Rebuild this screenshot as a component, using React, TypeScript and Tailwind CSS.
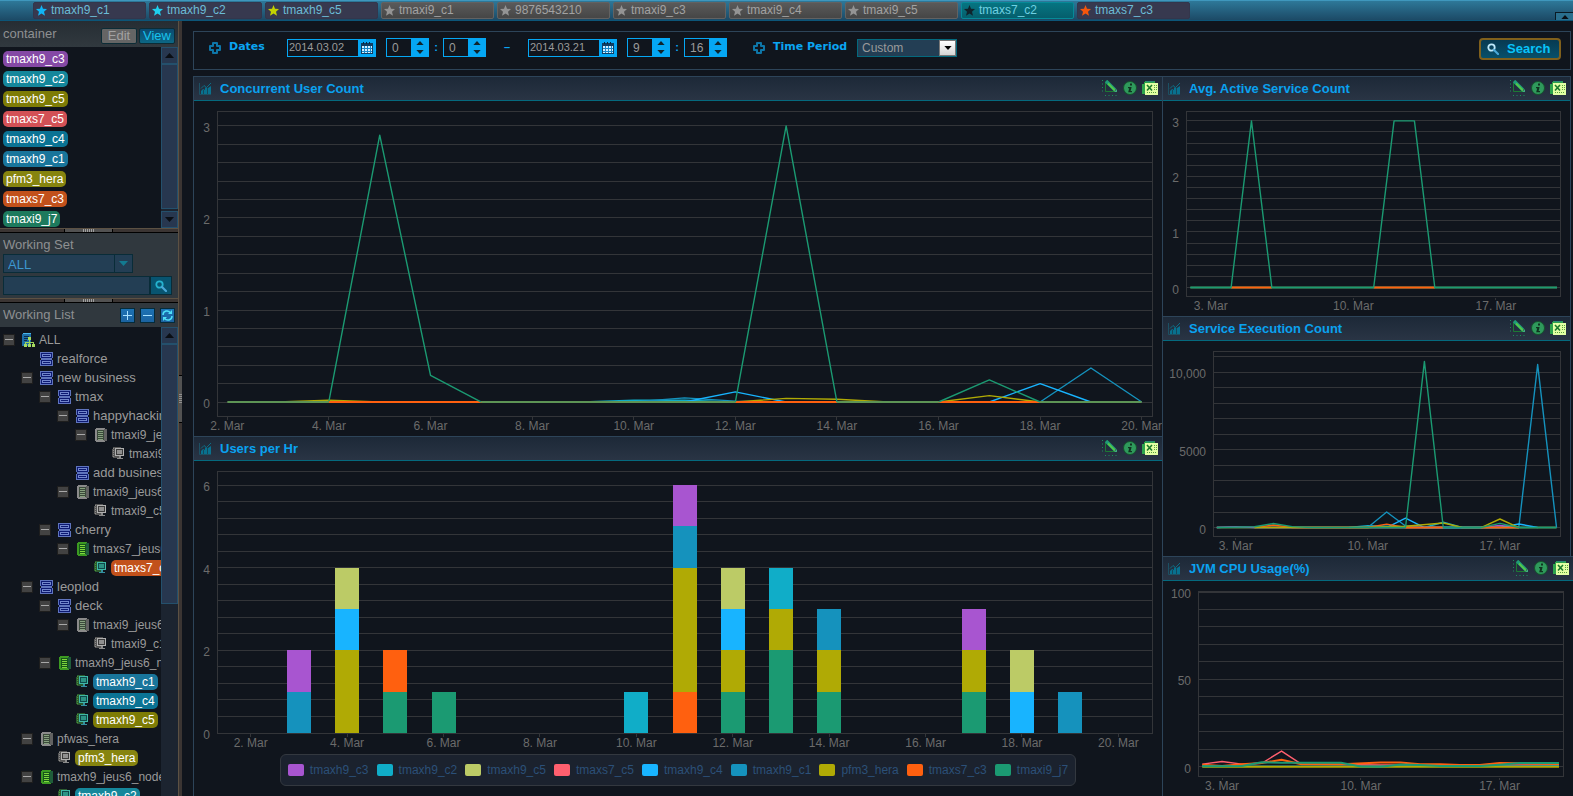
import React, { useState } from "react";
import clsx from "clsx";

const COLORS = {
  h9c3: "#a855d0",
  h9c2: "#10adc8",
  h9c5: "#bccb66",
  s7c5: "#ff5f6e",
  h9c4: "#18b4ff",
  h9c1: "#1592bd",
  hera: "#b0aa05",
  s7c3: "#ff600f",
  i9j7: "#1b9a72",
};

const tabs = [
  { name: "tmaxh9_c1", star: "#12b4f5", kind: "on" },
  { name: "tmaxh9_c2", star: "#1fd0ee", kind: "on" },
  { name: "tmaxh9_c5", star: "#c3d200", kind: "on" },
  { name: "tmaxi9_c1", star: "#949494", kind: "off" },
  { name: "9876543210", star: "#949494", kind: "off" },
  { name: "tmaxi9_c3", star: "#949494", kind: "off" },
  { name: "tmaxi9_c4", star: "#949494", kind: "off" },
  { name: "tmaxi9_c5", star: "#949494", kind: "off" },
  { name: "tmaxs7_c2", star: "#10242c", kind: "active" },
  { name: "tmaxs7_c3", star: "#f4560c", kind: "on" },
];

const containers = [
  { name: "tmaxh9_c3", bg: "bg-[#8549a5]" },
  { name: "tmaxh9_c2", bg: "bg-[#15879b]" },
  { name: "tmaxh9_c5", bg: "bg-[#7e7c06]" },
  { name: "tmaxs7_c5", bg: "bg-[#d35156]" },
  { name: "tmaxh9_c4", bg: "bg-[#0b7394]" },
  { name: "tmaxh9_c1", bg: "bg-[#19759b]" },
  { name: "pfm3_hera", bg: "bg-[#86840f]" },
  { name: "tmaxs7_c3", bg: "bg-[#c2511b]" },
  { name: "tmaxi9_j7", bg: "bg-[#1d7a5d]" },
];

type NodeKind = "root" | "group" | "node" | "nodeOn" | "was" | "wasOn";

interface TreeItem {
  level: number;
  label: string;
  kind: NodeKind;
  toggle?: boolean;
  chip?: string;
}

const tree: TreeItem[] = [
  { level: 0, label: "ALL", kind: "root", toggle: true },
  { level: 1, label: "realforce", kind: "group" },
  { level: 1, label: "new business", kind: "group", toggle: true },
  { level: 2, label: "tmax", kind: "group", toggle: true },
  { level: 3, label: "happyhacking", kind: "group", toggle: true },
  { level: 4, label: "tmaxi9_jeus6", kind: "node", toggle: true },
  { level: 5, label: "tmaxi9_c3", kind: "was" },
  { level: 3, label: "add business", kind: "group" },
  { level: 3, label: "tmaxi9_jeus6", kind: "node", toggle: true },
  { level: 4, label: "tmaxi9_c5", kind: "was" },
  { level: 2, label: "cherry", kind: "group", toggle: true },
  { level: 3, label: "tmaxs7_jeus6", kind: "nodeOn", toggle: true },
  { level: 4, label: "tmaxs7_c3", kind: "wasOn", chip: "bg-[#c2511b]" },
  { level: 1, label: "leoplod", kind: "group", toggle: true },
  { level: 2, label: "deck", kind: "group", toggle: true },
  { level: 3, label: "tmaxi9_jeus6", kind: "node", toggle: true },
  { level: 4, label: "tmaxi9_c1", kind: "was" },
  { level: 2, label: "tmaxh9_jeus6_node", kind: "nodeOn", toggle: true },
  { level: 3, label: "tmaxh9_c1", kind: "wasOn", chip: "bg-[#19759b]" },
  { level: 3, label: "tmaxh9_c4", kind: "wasOn", chip: "bg-[#0b7394]" },
  { level: 3, label: "tmaxh9_c5", kind: "wasOn", chip: "bg-[#7e7c06]" },
  { level: 1, label: "pfwas_hera", kind: "node", toggle: true },
  { level: 2, label: "pfm3_hera", kind: "was", chip: "bg-[#86840f]" },
  { level: 1, label: "tmaxh9_jeus6_node", kind: "nodeOn", toggle: true },
  { level: 2, label: "tmaxh9_c2", kind: "wasOn", chip: "bg-[#15879b]" },
];

const legend = [
  { name: "tmaxh9_c3", color: COLORS.h9c3 },
  { name: "tmaxh9_c2", color: COLORS.h9c2 },
  { name: "tmaxh9_c5", color: COLORS.h9c5 },
  { name: "tmaxs7_c5", color: COLORS.s7c5 },
  { name: "tmaxh9_c4", color: COLORS.h9c4 },
  { name: "tmaxh9_c1", color: COLORS.h9c1 },
  { name: "pfm3_hera", color: COLORS.hera },
  { name: "tmaxs7_c3", color: COLORS.s7c3 },
  { name: "tmaxi9_j7", color: COLORS.i9j7 },
];

type Point = [number, number];

interface Series {
  color: string;
  points: Point[];
  width?: number;
}

interface ChartProps {
  max: number;
  step: number;
  yLabels: [number, string][];
  days: number[];
  // where 2 Mar / 20 Mar and max / zero sit inside the frame, in percent
  x: [number, number];
  y: [number, number];
  series?: Series[];
  bars?: { day: number; parts: [string, number][] }[];
  pad: string;
}

/* ---------- icons ---------- */

const Star = ({ color }: { color: string }) => (
  <svg width="11" height="11" viewBox="0 0 11 11" className="shrink-0">
    <path d="M5.5 0 7 3.7 11 4 8 6.7 9 10.7 5.5 8.5 2 10.7 3 6.7 0 4 4 3.7Z" fill={color} />
  </svg>
);

const Cross = () => (
  <svg width="12" height="12" viewBox="0 0 12 12" className="shrink-0">
    <path d="M4 1H8V4H11V8H8V11H4V8H1V4H4Z" fill="#10151d" stroke="#0e76a8" strokeWidth="2" strokeLinejoin="round" />
  </svg>
);

const CalendarIcon = () => (
  <svg width="12" height="12" viewBox="0 0 12 12" shapeRendering="crispEdges">
    <path d="M0 1H12V12H0Z" fill="#103e63" />
    <path d="M2 0H3V2H2ZM5 0H6V2H5ZM8 0H9V2H8Z" fill="#06263f" />
    <path d="M1 4H11V11H1Z" fill="#d4efff" />
    <path d="M1 6H11M1 9H11M3.5 4V11M6.5 4V11M9 4V11" stroke="#1787c9" />
  </svg>
);

const Lens = ({ color }: { color: string }) => (
  <svg width="12" height="12" viewBox="0 0 12 12" fill="none">
    <circle cx="4.5" cy="4.5" r="3.2" stroke={color} strokeWidth="1.8" />
    <path d="M7 7 11 11" stroke="#4aa8d8" strokeWidth="2.2" strokeLinecap="round" />
  </svg>
);

const ChartIcon = () => (
  <svg width="13" height="13" viewBox="0 0 13 13" className="shrink-0">
    <path d="M.5 1V12.5H12" fill="none" stroke="#1c5063" />
    <path d="M2 9 4 7 6 8V12H2ZM6 6 7 5 9 7V12H6ZM9 6 12 4V12H9Z" fill="#08718f" />
    <path d="M2 6.5 5 3.5 7.5 5.5 12 1" fill="none" stroke="#0d6b83" />
    <path d="M4.5 8V12M8.5 6V12" stroke="#14485c" />
  </svg>
);

const PencilIcon = () => (
  <svg width="16" height="16" viewBox="0 0 16 16">
    <path d="M.5 0V12M3 15.5H16" stroke="#1f8c5c" strokeDasharray="1 2.5" />
    <path d="M3.5 3V11.5H13" fill="none" stroke="#1c7a33" />
    <path d="M4 1 13 10" stroke="#1f9d78" strokeWidth="3.4" />
    <path d="M6 3.5 13 10.5" stroke="#55c84a" strokeWidth="1.8" />
    <path d="M12 12H15V9Z" fill="#3fae7e" />
  </svg>
);

const InfoIcon = () => (
  <svg width="14" height="14" viewBox="0 0 14 14">
    <circle cx="7" cy="7" r="6.5" fill="#2f9a5c" stroke="#15532c" />
    <path d="M7 2.5H9V4.5H7ZM5 6H8.6L7.6 10H9V11.3H5.2L6.2 7.2H5Z" fill="#10331f" />
  </svg>
);

const ExcelIcon = () => (
  <svg width="16" height="16" viewBox="0 0 16 16" shapeRendering="crispEdges">
    <path d="M3 1H13V4H5V14H0V4H2V2H3Z" fill="#2ca34c" />
    <path d="M4 1H12V2H4Z" fill="#2a8a78" />
    <path d="M3 3H16V15H3Z" fill="#e2ffa3" />
    <path d="M5 5 10 10.5M10 5 5 10.5" stroke="#1b7a2c" strokeWidth="1.6" shapeRendering="auto" />
    <path d="M12 5.5H15M12 7.5H15M12 9.5H15M5 12.5H15" stroke="#55a03c" strokeDasharray="1 1" />
  </svg>
);

const TreeIcon = ({ kind }: { kind: NodeKind }) => {
  const on = kind === "nodeOn" || kind === "wasOn";
  if (kind === "root")
    return (
      <svg width="13" height="14" viewBox="0 0 13 14" className="shrink-0" shapeRendering="crispEdges">
        <path d="M0 1H9V13H0Z" fill="#1d6ea6" />
        <path d="M1 0H9V1H1Z" fill="#49b4ea" />
        <path d="M2 3H7M2 5H7M2 7H5" stroke="#0b2b48" />
        <path d="M7.5 5V10M3.5 12V9.5H11.5V12M7.5 9V12" stroke="#9bd25a" fill="none" />
        <path d="M6 4H9V7H6ZM2 11H5V14H2ZM6 11H9V14H6ZM10 11H13V14H10Z" fill="#a5da62" />
      </svg>
    );
  if (kind === "group")
    return (
      <svg width="13" height="14" viewBox="0 0 13 14" className="shrink-0" shapeRendering="crispEdges">
        <path d="M0 0H13V14H0Z" fill="#5f74bd" />
        <path d="M1 1H12V6H1ZM1 8H12V13H1Z" fill="#0d1a72" />
        <path d="M3 2H10V3H3ZM3 4H10V5H3ZM3 9H10V10H3ZM3 11H10V12H3Z" fill="#7286cc" />
        <path d="M2 2H3V5H2ZM10 2H11V5H10ZM2 9H3V12H2ZM10 9H11V12H10Z" fill="#7286cc" />
        <path d="M0 6H1V8H0ZM12 6H13V8H12Z" fill="#10151d" />
      </svg>
    );
  if (kind === "node" || kind === "nodeOn")
    return (
      <svg width="13" height="14" viewBox="0 0 13 14" className="shrink-0" shapeRendering="crispEdges">
        <path d="M1 1H2V0H11V1H12V13H11V14H2V13H1Z" fill={on ? "#3c9a22" : "#8b8b8b"} />
        <path d="M10 1H13V13H10Z" fill={on ? "#1f5c3a" : "#626262"} />
        <path d="M3 2H10V12H3Z" fill={on ? "#16551a" : "#3b4a3b"} />
        <path d="M4 3.5H9M4 5.5H9M4 7.5H9M4 9.5H9M4 11.5H9" stroke={on ? "#7fd63c" : "#86a07e"} />
      </svg>
    );
  return (
    <svg width="13" height="13" viewBox="0 0 13 13" className="shrink-0" shapeRendering="crispEdges">
      <path d="M0 2H1V0H9V11H1V10H0Z" fill={on ? "#2c5a30" : "#565656"} />
      <path d="M1.5 1V11" stroke={on ? "#4c9636" : "#8c8c8c"} strokeDasharray="1 1" />
      <path d="M3 1H12V9H3Z" fill={on ? "#3fb8a6" : "#b0b0b0"} />
      <path d="M4 2H11V8H4Z" fill={on ? "#0f4a4a" : "#3c3c3c"} />
      <path d="M5 3H10V7H5Z" fill={on ? "#2d9384" : "#8f8f8f"} />
      <path d="M7 9H9V11H7ZM5 11H11V12H5Z" fill={on ? "#3490a0" : "#8b8b8b"} />
    </svg>
  );
};

const Arrow = ({ up, className }: { up?: boolean; className?: string }) => (
  <svg width="9" height="5" viewBox="0 0 9 5" className={className} fill="currentColor">
    <path d={up ? "M0 5 4.5 0 9 5Z" : "M0 0 4.5 5 9 0Z"} />
  </svg>
);

/* ---------- chart ---------- */

const Chart = ({ max, step, yLabels, days, x, y, series = [], bars = [], pad }: ChartProps) => {
  const px = (day: number) => x[0] + ((day - 2) / 18) * (x[1] - x[0]);
  const py = (value: number) => y[1] - (value / max) * (y[1] - y[0]);
  const lines = Array.from({ length: Math.round(max / step) + 1 }, (_, i) => i * step);

  return (
    <div className={clsx("flex min-h-0 flex-1 pt-2.5 pr-[9px] pb-[19px]", pad)}>
      <div className="min-h-0 min-w-0 flex-1 border border-[#333539]">
        <svg className="block h-full w-full overflow-visible font-['Liberation_Sans',sans-serif] text-xs">
          <g stroke="#333539" shapeRendering="crispEdges">
            {lines.map((v) => (
              <line key={v} x1="0" x2="100%" y1={`${py(v)}%`} y2={`${py(v)}%`} />
            ))}
          </g>
          {bars.map(({ day, parts }) => {
            let base = 0;
            return (
              <g key={day} transform="translate(-12 0)" shapeRendering="crispEdges">
                {parts.map(([color, n], i) => {
                  base += n;
                  return (
                    <rect
                      key={i}
                      x={`${px(day)}%`}
                      y={`${py(base)}%`}
                      width="24"
                      height={`${py(0) - py(n)}%`}
                      fill={color}
                    />
                  );
                })}
              </g>
            );
          })}
          <svg width="100%" height="100%" viewBox="0 0 100 100" preserveAspectRatio="none">
            {series.map((s, i) => (
              <polyline
                key={i}
                points={s.points.map(([d, v]) => `${px(d)},${py(v)}`).join(" ")}
                fill="none"
                stroke={s.color}
                strokeWidth={s.width ?? 1.4}
                strokeLinejoin="round"
                vectorEffect="non-scaling-stroke"
              />
            ))}
          </svg>
          <g fill="#6b6b6b" textAnchor="end">
            {yLabels.map(([v, label]) => (
              <g key={v} transform="translate(-8 6)">
                <text y={`${py(v)}%`}>{label}</text>
              </g>
            ))}
          </g>
          {days.map((d) => (
            <g key={d}>
              <g transform="translate(0 14)">
                <text x={`${px(d)}%`} y="100%" textAnchor="middle" fill="#6b6b6b">
                  {d}. Mar
                </text>
              </g>
              <g transform="translate(0 4)" shapeRendering="crispEdges">
                <line x1={`${px(d)}%`} x2={`${px(d)}%`} y1="99%" y2="100%" stroke="#333539" />
              </g>
            </g>
          ))}
        </svg>
      </div>
    </div>
  );
};

const Panel = ({
  title,
  className,
  children,
}: {
  title: string;
  className?: string;
  children: React.ReactNode;
}) => (
  <section className={clsx("flex min-h-0 min-w-0 flex-1 flex-col border-t border-l border-[#2d4459]", className)}>
    <header className="flex h-6 shrink-0 items-center border-b border-[#04697e] bg-linear-to-b from-[#1d2938] to-[#293444] pr-1 pl-[5px]">
      <ChartIcon />
      <h2 className="ml-2 flex-1 truncate text-[13px] font-bold text-[#0aa2f0]">{title}</h2>
      <div className="flex gap-[5px] pb-0.5">
        <button aria-label="Edit chart"><PencilIcon /></button>
        <button aria-label="Info"><InfoIcon /></button>
        <button aria-label="Export"><ExcelIcon /></button>
      </div>
    </header>
    {children}
  </section>
);

/* ---------- filter bar ---------- */

const DateBox = ({ label, value }: { label: string; value: string }) => (
  <div className="flex h-[18px] w-[89px] border border-[#05a7f4]">
    <input
      aria-label={label}
      defaultValue={value}
      className="min-w-0 flex-1 pl-px text-[11px] text-[#9a9a9a] outline-none"
    />
    <button aria-label={`Pick ${label}`} className="flex w-[17px] items-center justify-center bg-[#05a7f4]">
      <CalendarIcon />
    </button>
  </div>
);

const Stepper = ({ label, initial }: { label: string; initial: number }) => {
  const [value, setValue] = useState(initial);
  return (
    <div className="flex h-[19px] w-[43px] border border-[#05a7f4]">
      <input
        aria-label={label}
        value={value}
        onChange={(e) => setValue(Number(e.target.value) || 0)}
        className="min-w-0 flex-1 pl-[5px] text-xs text-[#9a9a9a] outline-none"
      />
      <div className="flex w-[17px] flex-col items-center justify-center gap-[5px] bg-[#05a7f4] text-[#10242c]">
        <button aria-label={`${label} up`} onClick={() => setValue(value + 1)}>
          <Arrow up className="h-1 w-2" />
        </button>
        <button aria-label={`${label} down`} onClick={() => setValue(Math.max(0, value - 1))}>
          <Arrow className="h-1 w-2" />
        </button>
      </div>
    </div>
  );
};

const FilterBar = () => (
  <div className="mt-2.5 mb-1.5 flex h-[39px] shrink-0 items-start border border-[#2d4459] pt-1.5 pr-[9px] pl-[15px] font-['DejaVu_Sans',sans-serif] text-[11px] font-bold text-[#0aa5f2]">
    <div className="flex h-[19px] items-center">
      <Cross />
      <span className="ml-2 w-[58px]">Dates</span>
    </div>
    <div className="flex h-[19px] items-center font-['Liberation_Sans',sans-serif] font-normal">
      <DateBox label="start date" value="2014.03.02" />
      <span className="w-2.5" />
      <Stepper label="start hour" initial={0} />
      <span className="w-3.5 text-center font-bold">:</span>
      <Stepper label="start minute" initial={0} />
      <span className="w-[42px] text-center font-bold">–</span>
      <DateBox label="end date" value="2014.03.21" />
      <span className="w-2.5" />
      <Stepper label="end hour" initial={9} />
      <span className="w-3.5 text-center font-bold">:</span>
      <Stepper label="end minute" initial={16} />
    </div>
    <div className="ml-[26px] flex h-[19px] items-center">
      <Cross />
      <label htmlFor="period" className="ml-2 w-[84px]">
        Time Period
      </label>
      <div className="relative">
        <select
          id="period"
          className="block h-[18px] w-[100px] appearance-none border border-[#04697e] bg-[#233e54] pl-1 font-['Liberation_Sans',sans-serif] text-xs font-normal text-[#9a9a9a]"
        >
          <option>Custom</option>
          <option>Day</option>
          <option>Week</option>
        </select>
        <span className="pointer-events-none absolute top-px right-px flex h-4 w-[17px] items-center justify-center border border-[#777] bg-linear-to-b from-white to-[#d5d5d5] text-black">
          <Arrow className="h-1 w-2" />
        </span>
      </div>
    </div>
    <button className="ml-auto flex h-[22px] w-[82px] items-center rounded-sm border-2 border-[#80601c] bg-linear-to-b from-[#073a52] to-[#08506a] pl-1.5 font-['Liberation_Sans',sans-serif] text-[13px] text-[#08c4fa]">
      <Lens color="#bfe9fb" />
      <span className="ml-2">Search</span>
    </button>
  </div>
);

/* ---------- sidebar ---------- */

const HSplitter = () => (
  <div className="flex h-[5px] shrink-0 border-t border-b border-t-[#5c5143] border-b-black bg-[#3b3533]">
    <div className="ml-16 flex w-[49px] items-center justify-center gap-px border-x border-black bg-[#525252]">
      {[1, 2, 3, 4, 5, 6].map((i) => (
        <span key={i} className="h-[3px] w-px bg-[#a0a0a0]" />
      ))}
    </div>
  </div>
);

const Scrollbar = ({ full }: { full?: boolean }) => (
  <div className="flex w-[17px] shrink-0 flex-col bg-[#1c2430] text-[#0a0e14]">
    <button aria-label="Scroll up" className="flex h-[17px] items-center justify-center border border-[#24506c] bg-[#27374f]">
      <Arrow up />
    </button>
    <div className={clsx("border border-[#24506c] bg-[#27374f]", full ? "flex-1" : "h-[260px]")} />
    {full && (
      <button aria-label="Scroll down" className="mt-0.5 flex h-[17px] items-center justify-center border border-[#24506c] bg-[#27374f]">
        <Arrow />
      </button>
    )}
  </div>
);

const Chip = ({ name, bg }: { name: string; bg: string }) => (
  <span className={clsx("flex h-4 w-fit shrink-0 items-center rounded-[5px] px-[3px] text-xs text-white", bg)}>
    {name}
  </span>
);

const toolButton =
  "flex h-[15px] w-[15px] items-center justify-center border border-[#052b3a] bg-linear-to-b from-[#1c72b4] to-[#1b63a0]";

const Sidebar = () => (
  <aside className="flex w-[178px] shrink-0 flex-col overflow-hidden">
    <div className="flex h-[26px] shrink-0 items-center gap-0.5 bg-linear-to-b from-[#262d33] to-[#31393f] pr-[3px] pl-[3px]">
      <h2 className="flex-1 text-[13px] text-[#8e9092]">container</h2>
      <button className="mt-1 h-4 w-9 rounded-xs border border-[#0c2c36] bg-[#656565] text-[13px] leading-[14px] text-[#a2a2a2]">
        Edit
      </button>
      <button className="mt-1 h-4 w-9 rounded-xs border border-[#0c2c36] bg-linear-to-b from-[#0b4a70] to-[#0d6784] text-[13px] leading-[14px] text-[#18c2ee]">
        View
      </button>
    </div>
    <div className="flex shrink-0">
      <div className="flex flex-1 flex-col gap-1 pt-1 pb-px pl-[3px]">
        {containers.map((c) => (
          <Chip key={c.name} {...c} />
        ))}
      </div>
      <Scrollbar full />
    </div>
    <HSplitter />
    <div className="flex h-[65px] shrink-0 flex-col bg-[#30383e] px-[3px] pt-0.5">
      <h2 className="h-[19px] text-[13px] leading-[19px] text-[#8e9092]">Working Set</h2>
      <div className="relative w-[130px]">
        <select
          aria-label="Working set"
          className="block h-[19px] w-full appearance-none border border-[#092c38] bg-[#233e54] pl-1 text-[13px] text-[#3d97cf]"
        >
          <option>ALL</option>
        </select>
        <span className="pointer-events-none absolute inset-y-0 right-0 flex w-[19px] items-center justify-center border border-[#092c38] text-[#137a90]">
          <Arrow />
        </span>
      </div>
      <div className="mt-[3px] flex h-[19px] w-[169px]">
        <input
          aria-label="Search working set"
          className="min-w-0 flex-1 border border-[#092c38] bg-[#233e54] px-1 text-xs text-[#3d97cf] outline-none"
        />
        <button aria-label="Search" className="flex w-[22px] items-center justify-center border border-[#092c38] bg-[#085470]">
          <Lens color="#25b3cf" />
        </button>
      </div>
    </div>
    <HSplitter />
    <div className="flex h-6 shrink-0 items-center gap-[5px] bg-[#30383e] px-[3px]">
      <h2 className="flex-1 text-[13px] text-[#8e9092]">Working List</h2>
      <button aria-label="Expand all" className={toolButton}>
        <svg width="9" height="9" viewBox="0 0 9 9"><path d="M4.5 0V9M0 4.5H9" stroke="#a8e2ff" /></svg>
      </button>
      <button aria-label="Collapse all" className={toolButton}>
        <svg width="9" height="9" viewBox="0 0 9 9"><path d="M0 4.5H9" stroke="#a8e2ff" /></svg>
      </button>
      <button aria-label="Refresh" className={toolButton}>
        <svg width="11" height="11" viewBox="0 0 11 11" fill="none" stroke="#4fe0f8" strokeWidth="1.5">
          <path d="M1 5A4 4 0 0 1 8.5 3M10 6A4 4 0 0 1 2.5 8" />
          <path d="M10 0V4H6ZM1 11V7H5Z" fill="#4fe0f8" stroke="none" />
        </svg>
      </button>
    </div>
    <div className="flex min-h-0 flex-1">
      <ul className="min-w-0 flex-1 overflow-hidden pt-[3px] pl-[3px]">
        {tree.map((item, i) => (
          <li
            key={i}
            className={clsx(
              "flex h-[19px] items-center whitespace-nowrap text-[#9a9a9a]",
              item.kind === "group" ? "text-[13px]" : "text-xs"
            )}
            style={{ paddingLeft: item.level * 18 }}
          >
            {item.toggle ? (
              <button aria-label={`Toggle ${item.label}`} className="flex h-3 w-3 shrink-0 items-center justify-center border border-[#1e1e1e] bg-[#424242]">
                <span className="h-px w-2 bg-[#a8a8a8]" />
              </button>
            ) : (
              <span className="w-3 shrink-0" />
            )}
            <span className="mr-1 ml-[7px] flex">
              <TreeIcon kind={item.kind} />
            </span>
            {item.chip ? <Chip name={item.label} bg={item.chip} /> : item.label}
          </li>
        ))}
      </ul>
      <Scrollbar />
    </div>
  </aside>
);

const tabStyles: Record<string, string> = {
  on: "border-[#33364c] bg-[#37394f] text-[#6cbcd6]",
  off: "border-[#626262] bg-linear-to-b from-[#5a5a5a] to-[#464646] text-[#a2a2a2]",
  active: "border-[#068a98] bg-linear-to-b from-[#067582] to-[#055e6c] text-[#6fd0e2]",
};

// flat stretch lying on the zero line
const flat = (color: string, from = 2, to = 20): Series => ({ color, width: 2, points: [[from, 0], [to, 0]] });

const App = () => {
  const evenDays = [2, 4, 6, 8, 10, 12, 14, 16, 18, 20];

  return (
    <div className="flex h-screen flex-col overflow-hidden bg-[#10151d] font-['Liberation_Sans',sans-serif]">
      <nav className="flex h-[21px] shrink-0 gap-[3px] border-t border-b border-t-[#3f97bd] border-b-[#0c5578] bg-linear-to-b from-[#2e7899] to-[#1c4a66] pl-[33px]">
        {tabs.map((t) => (
          <button
            key={t.name}
            className={clsx("mt-px flex h-[17px] w-[113px] items-center gap-1 rounded-xs border pl-0.5 text-xs", tabStyles[t.kind])}
          >
            <Star color={t.star} />
            <span className="pb-0.5">{t.name}</span>
          </button>
        ))}
        <button aria-label="Collapse" className="ml-auto flex h-2 w-[18px] items-center justify-center self-end border-t border-l border-[#0a1a24] bg-[#2a6f8e] text-[#0a0e14]">
          <Arrow up className="h-1 w-2" />
        </button>
      </nav>

      <div className="flex min-h-0 flex-1">
        <Sidebar />
        <div className="flex w-1 shrink-0 items-center border-l border-[#5c5143] bg-[#3b3533] pb-5">
          <div className="flex h-12 w-full flex-col items-center justify-center gap-px border-y border-black bg-[#525252]">
            {[1, 2, 3, 4, 5].map((i) => (
              <span key={i} className="h-px w-full bg-[#909090]" />
            ))}
          </div>
        </div>

        <main className="flex min-w-0 flex-1 flex-col pr-0.5 pl-[11px]">
          <FilterBar />
          <div className="grid min-h-0 flex-1 grid-cols-[969fr_409fr]">
            <div className="flex min-h-0 min-w-0 flex-col">
              <Panel title="Concurrent User Count">
                <Chart
                  pad="pl-[23px]"
                  max={3}
                  step={0.2}
                  yLabels={[[0, "0"], [1, "1"], [2, "2"], [3, "3"]]}
                  days={evenDays}
                  x={[1, 98.9]}
                  y={[4.6, 95.4]}
                  series={[
                    { color: COLORS.h9c2, points: [[9, 0], [10, 0.02], [11, 0.02], [12, 0]] },
                    { color: COLORS.h9c1, points: [[10, 0], [11, 0.045], [12, 0.01], [13, 0], [18, 0], [19, 0.37], [20, 0]] },
                    { color: COLORS.h9c4, points: [[11, 0], [12, 0.11], [13, 0]] },
                    { color: COLORS.h9c4, points: [[17, 0], [18, 0.2], [19, 0]] },
                    { color: COLORS.hera, points: [[3, 0], [4, 0.02], [5, 0]] },
                    { color: COLORS.hera, points: [[12, 0], [13, 0.04], [14, 0.03], [15, 0]] },
                    { color: COLORS.hera, points: [[16, 0], [17, 0.07], [18, 0]] },
                    flat("#5d9455"),
                    flat(COLORS.s7c3, 4, 7),
                    flat(COLORS.s7c3, 12, 14),
                    flat(COLORS.s7c3, 16, 18),
                    { color: COLORS.i9j7, points: [[4, 0.01], [5, 2.9], [6, 0.29], [7, 0]] },
                    { color: COLORS.i9j7, points: [[12, 0], [13, 3], [14, 0]] },
                    { color: COLORS.i9j7, points: [[16, 0], [17, 0.24], [18, 0]] },
                  ]}
                />
              </Panel>
              <Panel title="Users per Hr">
                <Chart
                  pad="pl-[23px]"
                  max={6}
                  step={0.4}
                  yLabels={[[0, "0"], [2, "2"], [4, "4"], [6, "6"]]}
                  days={evenDays}
                  x={[3.5, 96.4]}
                  y={[5, 100]}
                  bars={[
                    { day: 3, parts: [[COLORS.h9c1, 1], [COLORS.h9c3, 1]] },
                    { day: 4, parts: [[COLORS.hera, 2], [COLORS.h9c4, 1], [COLORS.h9c5, 1]] },
                    { day: 5, parts: [[COLORS.i9j7, 1], [COLORS.s7c3, 1]] },
                    { day: 6, parts: [[COLORS.i9j7, 1]] },
                    { day: 10, parts: [[COLORS.h9c2, 1]] },
                    { day: 11, parts: [[COLORS.s7c3, 1], [COLORS.hera, 3], [COLORS.h9c1, 1], [COLORS.h9c3, 1]] },
                    { day: 12, parts: [[COLORS.i9j7, 1], [COLORS.hera, 1], [COLORS.h9c4, 1], [COLORS.h9c5, 1]] },
                    { day: 13, parts: [[COLORS.i9j7, 2], [COLORS.hera, 1], [COLORS.h9c2, 1]] },
                    { day: 14, parts: [[COLORS.i9j7, 1], [COLORS.hera, 1], [COLORS.h9c1, 1]] },
                    { day: 17, parts: [[COLORS.i9j7, 1], [COLORS.hera, 1], [COLORS.h9c3, 1]] },
                    { day: 18, parts: [[COLORS.h9c4, 1], [COLORS.h9c5, 1]] },
                    { day: 19, parts: [[COLORS.h9c1, 1]] },
                  ]}
                />
                <ul className="mx-auto mt-px mb-2.5 flex h-8 shrink-0 items-center gap-2 rounded-md border border-[#33383f] bg-[#1b222e] px-[7px] text-xs text-[#2b5078]">
                  {legend.map((l) => (
                    <li key={l.name} className="flex items-center gap-1.5">
                      <svg width="16" height="12">
                        <rect width="16" height="12" rx="2" fill={l.color} />
                      </svg>
                      {l.name}
                    </li>
                  ))}
                </ul>
              </Panel>
            </div>
            <div className="flex min-h-0 min-w-0 flex-col">
              <Panel title="Avg. Active Service Count" className="border-r">
                <Chart
                  pad="pl-[23px]"
                  max={3}
                  step={0.2}
                  yLabels={[[0, "0"], [1, "1"], [2, "2"], [3, "3"]]}
                  days={[3, 10, 17]}
                  x={[0.9, 99.2]}
                  y={[4.8, 95.4]}
                  series={[
                    flat("#4a9160"),
                    flat(COLORS.s7c3, 4, 6),
                    flat(COLORS.s7c3, 11, 14),
                    { color: COLORS.i9j7, points: [[2, 0], [4, 0], [5, 3], [6, 0], [11, 0], [12, 3], [13, 3], [14, 0], [20, 0]] },
                  ]}
                />
              </Panel>
              <Panel title="Service Execution Count" className="border-r">
                <Chart
                  pad="pl-[50px]"
                  max={11000}
                  step={1000}
                  yLabels={[[0, "0"], [5000, "5000"], [10000, "10,000"]]}
                  days={[3, 10, 17]}
                  x={[0.8, 99]}
                  y={[2.6, 95.4]}
                  series={[
                    flat("#5d9455"),
                    { color: COLORS.h9c3, points: [[2, 0], [3, 60], [4, 0], [16, 0], [17, 130], [18, 0]] },
                    { color: COLORS.h9c2, points: [[9, 0], [10, 120], [11, 80], [13, 0], [14, 340], [15, 0]] },
                    { color: COLORS.h9c1, points: [[10, 0], [11, 1000], [12, 100], [13, 0], [18, 0], [19, 10500], [20, 0]] },
                    { color: COLORS.h9c4, points: [[11, 0], [12, 600], [13, 0], [17, 0], [18, 230], [19, 0]] },
                    flat(COLORS.s7c3, 12, 14),
                    flat(COLORS.s7c3, 16, 18),
                    { color: COLORS.s7c3, points: [[4, 0], [5, 160], [6, 0], [10, 0], [11, 220], [12, 0]] },
                    { color: COLORS.hera, points: [[4, 0], [10, 0], [11, 60], [12, 80], [14, 290], [15, 0], [16, 0], [17, 550], [18, 0]] },
                    { color: COLORS.i9j7, points: [[2, 0], [4, 50], [5, 260], [6, 60], [7, 0], [12, 0], [13, 10700], [14, 0], [16, 0], [17, 270], [18, 0], [20, 0]] },
                  ]}
                />
              </Panel>
              <Panel title="JVM CPU Usage(%)" className="-mr-0.5">
                <Chart
                  pad="pl-[35px]"
                  max={100}
                  step={10}
                  yLabels={[[0, "0"], [50, "50"], [100, "100"]]}
                  days={[3, 10, 17]}
                  x={[0.9, 98.9]}
                  y={[0, 95]}
                  series={[
                    { color: COLORS.s7c5, points: [[2, 1.5], [3, 3], [4, 1.5], [5, 2], [6, 9], [7, 1.5], [11, 1], [20, 1]] },
                    { color: COLORS.s7c3, width: 2, points: [[2, 1.2], [3, 0.5], [4, 1.5], [5, 2.2], [6, 4], [7, 1.5], [9, 1.4], [11, 2.5], [12, 2.5], [13, 1.4], [14, 1.4], [15, 1], [16, 1], [17, 2.2], [18, 2], [20, 1.6]] },
                    { color: COLORS.h9c1, points: [[2, 0.5], [10, 0.3], [20, 0.6]] },
                    flat(COLORS.hera),
                    { color: COLORS.i9j7, width: 2, points: [[2, 0.3], [4, 0.5], [5, 2.6], [6, 2.3], [9, 2.3], [10, 0.2], [11, 0], [12, 1.3], [13, 1.1], [14, 0.4], [16, 0.4], [17, 1.2], [18, 2.2], [20, 2.2]] },
                  ]}
                />
              </Panel>
            </div>
          </div>
        </main>
      </div>
    </div>
  );
};

export default App;
